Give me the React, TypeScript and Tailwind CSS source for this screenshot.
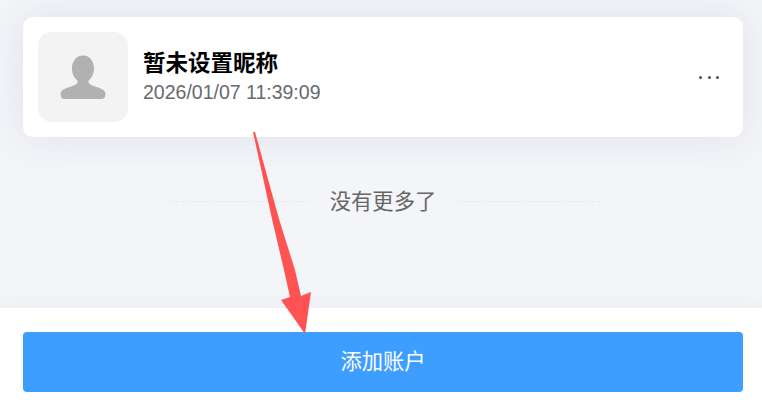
import React from 'react';

const FONT = "font-['Liberation_Sans','Noto_Sans_CJK_SC',sans-serif]";

const App: React.FC = () => {
  return (
    <div className={`relative w-[762px] h-[405px] overflow-hidden flex flex-col bg-[#f4f5f9] ${FONT}`}>
      <div className="flex-1 pl-[23px] pr-[19px] pt-[17px]">
        <div className="h-[120px] bg-white rounded-[10px] shadow-[0_0_40px_rgba(50,60,90,0.11)] flex items-center pl-[15px] pr-[24px]">
          <div className="w-[90px] h-[90px] rounded-[14px] bg-[#f3f3f3] flex items-center justify-center">
            <svg width="46" height="46" viewBox="0 0 48 48">
              <path
                d="M24 1.500C16.500 1.500 12.500 8 12.500 15C12.500 20.500 15 25 18 27.500C18.700 29.500 18.200 31 16 32.200C11 34.600 5 35.500 1.800 38.500C-0.300 41 0.600 47 4 47L44 47C47.400 47 48.300 41 46.200 38.500C43 35.500 37 34.600 32 32.200C29.800 31 29.300 29.500 30 27.500C33 25 35.500 20.500 35.500 15C35.500 8 31.500 1.500 24 1.500Z"
                fill="#b1b1b1"
              />
            </svg>
          </div>
          <div className="ml-[15px] flex-1 flex flex-col">
            <div className="text-[22.5px] leading-[30px] font-bold text-black">暂未设置昵称</div>
            <div className="text-[19.5px] leading-[26px] text-[#666a70]">2026/01/07 11:39:09</div>
          </div>
          <div className="flex gap-[5.5px] items-center">
            <span className="w-[3px] h-[3px] rounded-full bg-[#46505e]" />
            <span className="w-[3px] h-[3px] rounded-full bg-[#46505e]" />
            <span className="w-[3px] h-[3px] rounded-full bg-[#46505e]" />
          </div>
        </div>
        <div className="mt-[49px] flex items-center justify-center">
          <div className="w-[142px] border-t border-dashed border-[#e6e8ee]" />
          <div className="w-[150px] pt-[2px] text-center text-[21.3px] leading-[28px] text-[#666666]">没有更多了</div>
          <div className="w-[142px] border-t border-dashed border-[#e6e8ee]" />
        </div>
      </div>
      <div className="h-[97px] bg-white pl-[23px] pr-[19px] pt-[24px] shadow-[0_0_20px_rgba(50,60,90,0.06)]">
        <div className="h-[60px] pt-[2px] rounded-[4px] bg-[#3e9eff] flex items-center justify-center text-[21.3px] text-white">
          添加账户
        </div>
      </div>
      {/* annotation arrow */}
      <svg className="absolute left-0 top-0 pointer-events-none" width="762" height="405" viewBox="0 0 762 405">
        <path d="M253 132L255 132L279 219L295 270L301 296L311 292L305 334L281 300L290 297L284 270L272 219Z" fill="#ff5252" />
      </svg>
    </div>
  );
};

export default App;
